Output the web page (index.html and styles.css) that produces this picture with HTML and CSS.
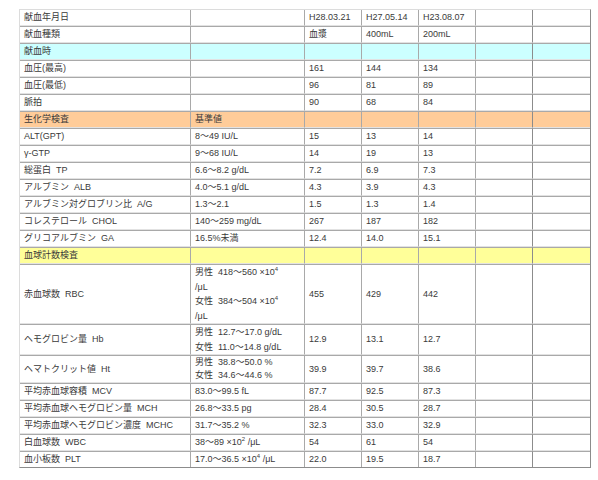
FILE: index.html
```html
<!DOCTYPE html>
<html>
    <head>
        <meta http-equiv="Content-Type" content="text/html; charset=utf-8"/>
        <link rel="stylesheet" href="styles.css">
    </head>
    <body>
        <div class="wrap">
            <table class="kensa">
                <colgroup>
                    <col class="c_name">
                    <col class="c_std">
                    <col class="c_val">
                    <col class="c_val">
                    <col class="c_val">
                    <col class="c_val">
                    <col class="c_val">
                </colgroup>
                <tr><td>献血年月日</td><td></td><td>H28.03.21</td><td>H27.05.14</td><td>H23.08.07</td><td class="dark"></td><td></td></tr>
                <tr><td>献血種類</td><td></td><td>血漿</td><td>400mL</td><td>200mL</td><td class="dark"></td><td></td></tr>
                <tr class="cyan"><td>献血時</td><td></td><td></td><td></td><td></td><td class="dark"></td><td></td></tr>
                <tr><td>血圧(最高)</td><td></td><td>161</td><td>144</td><td>134</td><td class="dark"></td><td></td></tr>
                <tr><td>血圧(最低)</td><td></td><td>96</td><td>81</td><td>89</td><td class="dark"></td><td></td></tr>
                <tr><td>脈拍</td><td></td><td>90</td><td>68</td><td>84</td><td class="dark"></td><td></td></tr>
                <tr class="orange"><td>生化学検査</td><td>基準値</td><td></td><td></td><td></td><td class="dark"></td><td></td></tr>
                <tr><td>ALT(GPT)</td><td>8～49 IU/L</td><td>15</td><td>13</td><td>14</td><td class="dark"></td><td></td></tr>
                <tr><td>γ-GTP</td><td>9～68 IU/L</td><td>14</td><td>19</td><td>13</td><td class="dark"></td><td></td></tr>
                <tr><td>総蛋白&nbsp;&nbsp;TP</td><td>6.6～8.2 g/dL</td><td>7.2</td><td>6.9</td><td>7.3</td><td class="dark"></td><td></td></tr>
                <tr><td>アルブミン&nbsp;&nbsp;ALB</td><td>4.0～5.1 g/dL</td><td>4.3</td><td>3.9</td><td>4.3</td><td class="dark"></td><td></td></tr>
                <tr><td>アルブミン対グロブリン比&nbsp;&nbsp;A/G</td><td>1.3～2.1</td><td>1.5</td><td>1.3</td><td>1.4</td><td class="dark"></td><td></td></tr>
                <tr><td>コレステロール&nbsp;&nbsp;CHOL</td><td>140～259 mg/dL</td><td>267</td><td>187</td><td>182</td><td class="dark"></td><td></td></tr>
                <tr><td>グリコアルブミン&nbsp;&nbsp;GA</td><td>16.5%未満</td><td>12.4</td><td>14.0</td><td>15.1</td><td class="dark"></td><td></td></tr>
                <tr class="yellow"><td>血球計数検査</td><td></td><td></td><td></td><td></td><td class="dark"></td><td></td></tr>
                <tr class="multi"><td>赤血球数&nbsp;&nbsp;RBC</td><td>男性&nbsp;&nbsp;418～560 ×10<sup>4</sup><br>/μL<br>女性&nbsp;&nbsp;384～504 ×10<sup>4</sup><br>/μL</td><td>455</td><td>429</td><td>442</td><td class="dark"></td><td></td></tr>
                <tr class="multi hb"><td>ヘモグロビン量&nbsp;&nbsp;Hb</td><td>男性&nbsp;&nbsp;12.7～17.0 g/dL<br>女性&nbsp;&nbsp;11.0～14.8 g/dL</td><td>12.9</td><td>13.1</td><td>12.7</td><td class="dark"></td><td></td></tr>
                <tr class="multi ht"><td>ヘマトクリット値&nbsp;&nbsp;Ht</td><td>男性&nbsp;&nbsp;38.8～50.0 %<br>女性&nbsp;&nbsp;34.6～44.6 %</td><td>39.9</td><td>39.7</td><td>38.6</td><td class="dark"></td><td></td></tr>
                <tr><td>平均赤血球容積&nbsp;&nbsp;MCV</td><td>83.0～99.5 fL</td><td>87.7</td><td>92.5</td><td>87.3</td><td class="dark"></td><td></td></tr>
                <tr><td>平均赤血球ヘモグロビン量&nbsp;&nbsp;MCH</td><td>26.8～33.5 pg</td><td>28.4</td><td>30.5</td><td>28.7</td><td class="dark"></td><td></td></tr>
                <tr><td>平均赤血球ヘモグロビン濃度&nbsp;&nbsp;MCHC</td><td>31.7～35.2 %</td><td>32.3</td><td>33.0</td><td>32.9</td><td class="dark"></td><td></td></tr>
                <tr><td>白血球数&nbsp;&nbsp;WBC</td><td>38～89 ×10<sup>2</sup> /μL</td><td>54</td><td>61</td><td>54</td><td class="dark"></td><td></td></tr>
                <tr><td>血小板数&nbsp;&nbsp;PLT</td><td>17.0～36.5 ×10<sup>4</sup> /μL</td><td>22.0</td><td>19.5</td><td>18.7</td><td class="dark"></td><td></td></tr>
            </table>
        </div>
    </body>
</html>
```

FILE: styles.css
```css
body {
    margin: 0;
    background-color: #ffffff;
}

.wrap {
    padding: 9px 8px 0 19px;
}

.kensa {
    border-collapse: separate;
    border-spacing: 0;
    table-layout: fixed;
    width: 571px;
    border-style: solid;
    border-width: 1px 1px 1px 1px;
    border-color: #dcdcdc #8c8c8c #8c8c8c #dcdcdc;
    font-family: "Liberation Sans", "Noto Sans CJK JP", sans-serif;
    font-size: 9px;
    color: #3a3a3a;
}

.c_name { width: 171px; }
.c_std { width: 114px; }
.c_val { width: 57px; }

.kensa td {
    height: 15px;
    line-height: 15px;
    padding: 0 0 0 4px;
    border-top: 1px solid #a9a9a9;
    border-bottom: 1px solid #e2e2e2;
    border-right: 1px solid #a9a9a9;
    white-space: nowrap;
    overflow: hidden;
    vertical-align: middle;
}

.kensa td:last-child {
    border-right: none;
}

.kensa td.dark {
    border-right-color: #8c8c8c;
}

.kensa tr:first-child td {
    border-top: none;
}

.kensa tr:last-child td {
    border-bottom: none;
}

.cyan td { background-color: #ccffff; }
.orange td { background-color: #ffcc99; }
.yellow td { background-color: #ffff99; }

.multi td {
    line-height: 14.5px;
}

.ht td {
    line-height: 13px;
}

sup {
    font-size: 6px;
    line-height: 0;
    vertical-align: 4px;
}
```
